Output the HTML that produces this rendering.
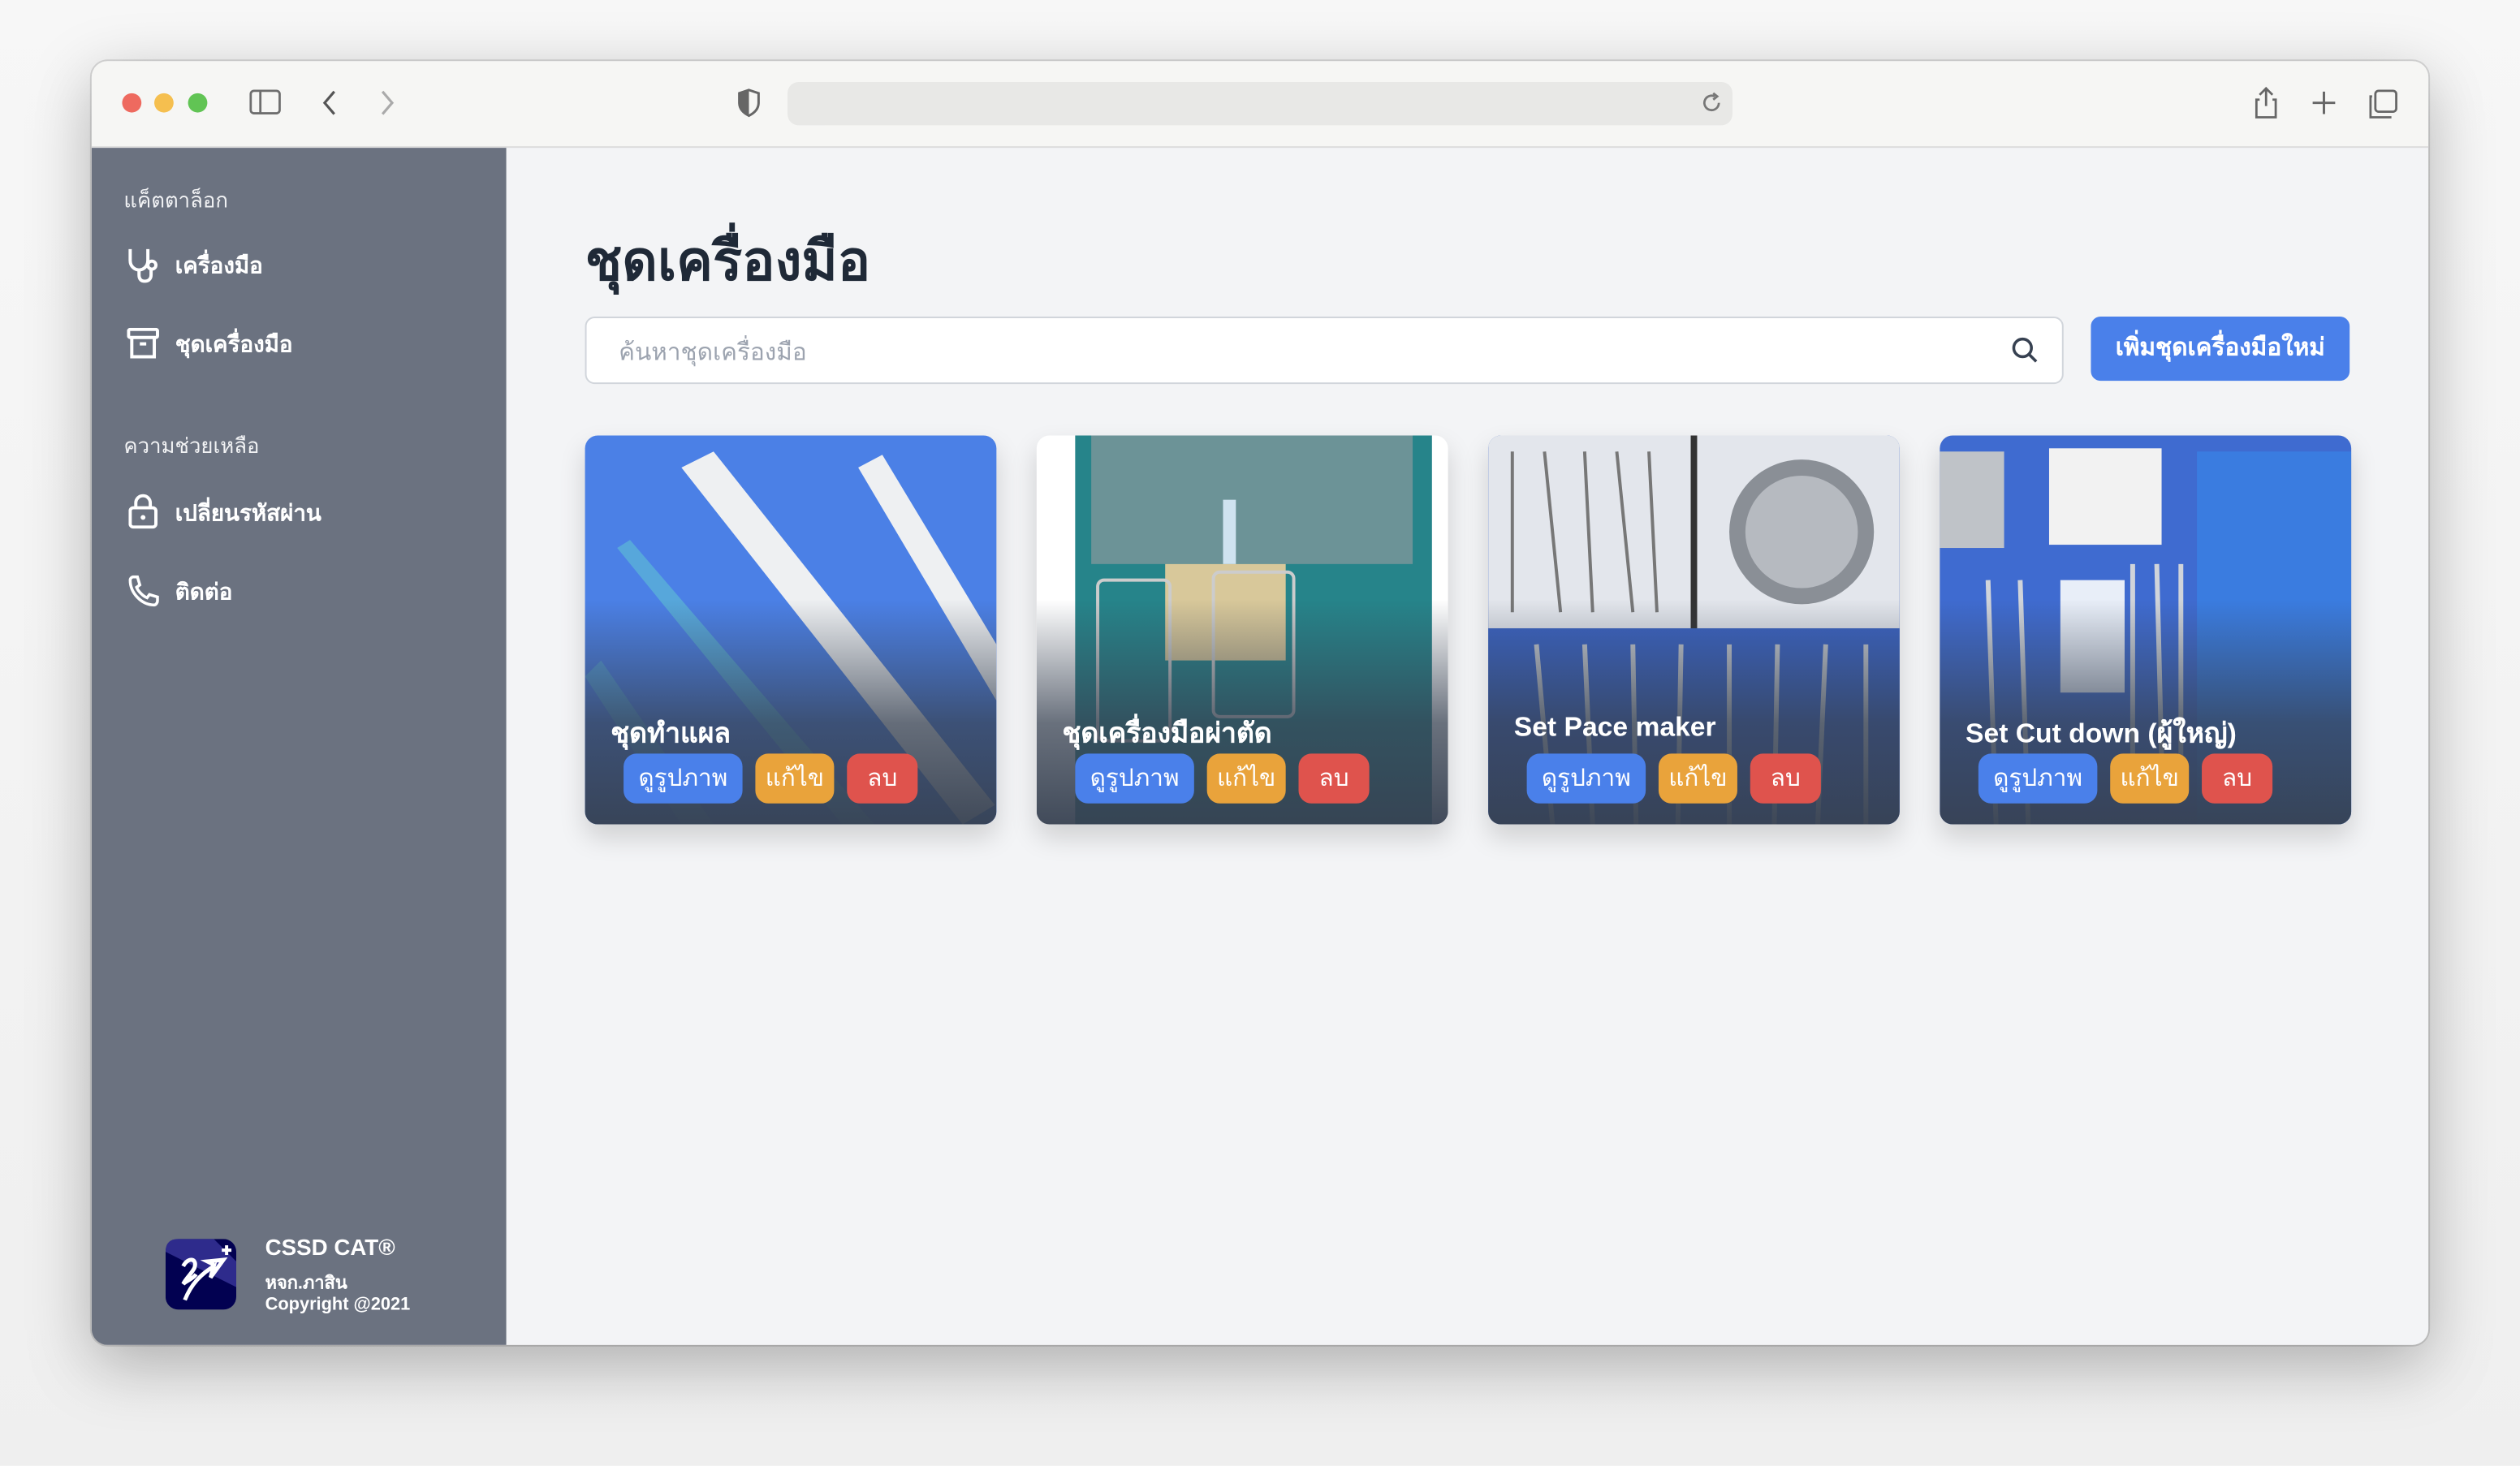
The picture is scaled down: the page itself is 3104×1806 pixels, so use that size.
<!DOCTYPE html>
<html><head><meta charset="utf-8">
<style>
html,body{margin:0;padding:0;}
body{width:3104px;height:1806px;overflow:hidden;background:#f4f4f4;font-family:"Liberation Sans","DejaVu Sans",sans-serif;}
#s{position:absolute;left:0;top:0;width:1568px;height:912px;transform:scale(1.97959);transform-origin:0 0;background:linear-gradient(#f7f7f7,#efefef);}
.win{position:absolute;left:57px;top:38px;width:1454px;height:799px;border-radius:10px;overflow:hidden;background:#f3f4f6;box-shadow:0 12px 40px rgba(0,0,0,.28),0 0 0 1px rgba(0,0,0,.12);}
.tb{position:absolute;left:0;top:0;width:100%;height:53px;background:#f6f6f4;border-bottom:1px solid #dcdcdc;}
.dot{position:absolute;top:20px;width:12px;height:12px;border-radius:50%;}
.side{position:absolute;left:0;top:54px;width:258px;height:745px;background:#6b7280;color:#fff;}
.abs{position:absolute;}
.sec{position:absolute;left:20px;font-size:13px;font-weight:300;color:#f1f2f4;}
.item{position:absolute;left:52px;font-size:14px;font-weight:700;}
.card{position:absolute;top:233px;width:256px;height:242px;border-radius:8px;overflow:hidden;box-shadow:0 8px 16px rgba(0,0,0,.15);}
.ov{position:absolute;left:0;right:0;bottom:0;height:140px;background:linear-gradient(rgba(55,65,81,0),rgba(55,65,81,.75) 55%,rgba(55,65,81,.95));}
.ct{position:absolute;left:16px;top:172px;color:#fff;font-size:17px;font-weight:600;white-space:nowrap;}
.b{position:absolute;top:198px;height:31px;border-radius:8px;color:#fff;font-size:15px;font-weight:500;line-height:31px;text-align:center;}
.b1{left:24px;width:74px;background:#4a80ea;}
.b2{left:106px;width:49px;background:#e9a33b;}
.b3{left:163px;width:44px;background:#df534d;}
</style></head><body><div id="s">
<div class="win">
 <div class="tb">
  <div class="dot" style="left:19px;background:#ee6a5f"></div>
  <div class="dot" style="left:39px;background:#f5bf4f"></div>
  <div class="dot" style="left:60px;background:#61c454"></div>
  <svg class="abs" style="left:98px;top:17px" width="20" height="18" viewBox="0 0 20 18"><rect x="1" y="1.5" width="18" height="14" rx="2" fill="none" stroke="#6e6e6e" stroke-width="1.4"/><line x1="7" y1="1.5" x2="7" y2="15.5" stroke="#6e6e6e" stroke-width="1.4"/></svg>
  <svg class="abs" style="left:142px;top:17px" width="12" height="18"><path d="M9 2 L3 9 L9 16" fill="none" stroke="#555" stroke-width="1.6"/></svg>
  <svg class="abs" style="left:178px;top:17px" width="12" height="18"><path d="M3 2 L9 9 L3 16" fill="none" stroke="#aaa" stroke-width="1.6"/></svg>
  <svg class="abs" style="left:402px;top:17px" width="14" height="18"><path d="M7 1 L13 3 V9 C13 13 10 15.5 7 17 C4 15.5 1 13 1 9 V3 Z" fill="none" stroke="#666" stroke-width="1.5"/><path d="M7 1 L1 3 V9 C1 13 4 15.5 7 17 Z" fill="#666"/></svg>
  <div class="abs" style="left:433px;top:13px;width:588px;height:27px;border-radius:7px;background:#e8e8e6"></div>
  <svg class="abs" style="left:1001px;top:19px" width="14" height="14"><path d="M11.5 7 A4.5 4.5 0 1 1 9 3" fill="none" stroke="#777" stroke-width="1.4"/><path d="M8 1 L10.5 3 L8 5" fill="none" stroke="#777" stroke-width="1.4"/></svg>
  <svg class="abs" style="left:1344px;top:15px" width="18" height="22"><path d="M9 2 V13 M5 6 L9 2 L13 6 M5 9 H3 V20 H15 V9 H13" fill="none" stroke="#666" stroke-width="1.4"/></svg>
  <svg class="abs" style="left:1381px;top:18px" width="16" height="16"><path d="M8 1 V15 M1 8 H15" stroke="#666" stroke-width="1.5"/></svg>
  <svg class="abs" style="left:1416px;top:17px" width="20" height="20"><rect x="5" y="1.5" width="13" height="13" rx="2" fill="none" stroke="#666" stroke-width="1.4"/><path d="M3 5 H2 V18 H15" fill="none" stroke="#666" stroke-width="1.4"/></svg>
 </div>
 <div class="side">
  <div class="sec" style="top:22px">แค็ตตาล็อก</div>
  <svg class="abs" style="left:21px;top:61px" width="22" height="24" viewBox="0 0 22 24"><path d="M3 2 V9 C3 13 6 15 8.5 15 C11 15 14 13 14 9 V2" fill="none" stroke="#fff" stroke-width="2"/><path d="M8.5 15 V18 C8.5 21 10 22 12 22 C14 22 16 21 16 18 V15" fill="none" stroke="#fff" stroke-width="2"/><circle cx="16.5" cy="12" r="2.5" fill="none" stroke="#fff" stroke-width="2"/></svg>
  <div class="item" style="top:63px">เครื่องมือ</div>
  <svg class="abs" style="left:22px;top:112px" width="20" height="20" viewBox="0 0 20 20"><rect x="1" y="1" width="18" height="5" rx="1" fill="none" stroke="#fff" stroke-width="2"/><path d="M3 6 V18 H17 V6 M8 10 H12" fill="none" stroke="#fff" stroke-width="2"/></svg>
  <div class="item" style="top:112px">ชุดเครื่องมือ</div>
  <div class="sec" style="top:175px">ความช่วยเหลือ</div>
  <svg class="abs" style="left:23px;top:215px" width="18" height="22" viewBox="0 0 18 22"><rect x="1" y="9" width="16" height="12" rx="2" fill="none" stroke="#fff" stroke-width="2"/><path d="M4.5 9 V6 A4.5 4.5 0 0 1 13.5 6 V9" fill="none" stroke="#fff" stroke-width="2"/><circle cx="9" cy="15" r="1.5" fill="#fff"/></svg>
  <div class="item" style="top:217px">เปลี่ยนรหัสผ่าน</div>
  <svg class="abs" style="left:22px;top:266px" width="20" height="20" viewBox="0 0 20 20"><path d="M2 3 C2 2 3 1 4 1 H6.5 L8 6 L6 7.5 C7 10 10 13 12.5 14 L14 12 L19 13.5 V16 C19 17 18 18.5 17 18.5 C9 18.5 2 11 2 3 Z" fill="none" stroke="#fff" stroke-width="1.8"/></svg>
  <div class="item" style="top:266px">ติดต่อ</div>
  <svg class="abs" style="left:46px;top:679px" width="44" height="44" viewBox="0 0 44 44"><rect width="44" height="44" rx="8" fill="#020151"/><path d="M0 8 Q0 0 8 0 H30 L44 14 V30 Z" fill="#2e2b8c"/><path d="M12 38 C16 28 22 22 30 17 L28 24 L36 13 L26 14 L30 16" fill="none" stroke="#fff" stroke-width="2.5"/><path d="M11 17 C14 11 20 12 18 18 C16 22 13 24 11 28 C13 26 17 25 19 22" fill="none" stroke="#fff" stroke-width="2.5"/><path d="M38 4 V10 M35 7 H41" stroke="#fff" stroke-width="2"/></svg>
  <div class="abs" style="left:108px;top:676px;font-size:14px;font-weight:600">CSSD CAT®</div>
  <div class="abs" style="left:108px;top:697px;font-size:11px;font-weight:600">หจก.ภาสิน</div>
  <div class="abs" style="left:108px;top:714px;font-size:11px;font-weight:600">Copyright @2021</div>
 </div>
 <div class="abs" style="left:307px;top:97px;font-size:34px;font-weight:700;color:#1f2937">ชุดเครื่องมือ</div>
 <div class="abs" style="left:307px;top:159px;width:918px;height:40px;background:#fff;border:1px solid #d1d5db;border-radius:6px"></div>
 <div class="abs" style="left:328px;top:169px;font-size:15px;color:#9ca3af">ค้นหาชุดเครื่องมือ</div>
 <svg class="abs" style="left:1194px;top:171px" width="18" height="18"><circle cx="7.5" cy="7.5" r="5.5" fill="none" stroke="#374151" stroke-width="1.8"/><path d="M11.5 11.5 L16 16" stroke="#374151" stroke-width="1.8"/></svg>
 <div class="abs" style="left:1244px;top:159px;width:161px;height:40px;border-radius:6px;background:#4a80ea;color:#fff;font-size:15px;font-weight:600;line-height:40px;text-align:center">เพิ่มชุดเครื่องมือใหม่</div>

 <div class="card" style="left:307px;background:#4b80e6">
  <svg class="abs" width="256" height="242"><g fill="#eef0f2"><path d="M60 20 L80 10 L255 230 L235 242 Z"/><path d="M170 20 L185 12 L256 130 L256 165 Z"/></g><path d="M20 70 L28 65 L180 242 L160 242 Z" fill="#5ab0d8" opacity=".8"/><path d="M0 150 L10 140 L80 242 L60 242 Z" fill="#5ab0d8" opacity=".6"/></svg>
  <div class="ov"></div><div class="ct">ชุดทำแผล</div>
  <div class="b b1">ดูรูปภาพ</div><div class="b b2">แก้ไข</div><div class="b b3">ลบ</div>
 </div>
 <div class="card" style="left:588px;background:#fff">
  <svg class="abs" width="256" height="242"><rect x="24" y="0" width="222" height="242" fill="#26848a"/><rect x="34" y="0" width="200" height="80" fill="#8a9a9c" opacity=".7"/><rect x="80" y="80" width="75" height="60" fill="#d8c89a"/><rect x="116" y="40" width="8" height="40" fill="#cfe3f0"/><rect x="110" y="85" width="50" height="90" rx="4" fill="none" stroke="#ccc" stroke-width="2"/><rect x="38" y="90" width="45" height="100" rx="4" fill="none" stroke="#ccc" stroke-width="2"/></svg>
  <div class="ov"></div><div class="ct">ชุดเครื่องมือผ่าตัด</div>
  <div class="b b1">ดูรูปภาพ</div><div class="b b2">แก้ไข</div><div class="b b3">ลบ</div>
 </div>
 <div class="card" style="left:869px;background:#3a63c4">
  <svg class="abs" width="256" height="242"><rect width="256" height="120" fill="#e3e6ec"/><rect x="126" y="0" width="4" height="120" fill="#333"/><circle cx="195" cy="60" r="45" fill="#8a8f96"/><circle cx="195" cy="60" r="35" fill="#b6bac0"/><g stroke="#777" stroke-width="2" fill="none"><path d="M15 10 L15 110 M35 10 L45 110 M60 10 L65 110 M80 10 L90 110 M100 10 L105 110"/></g><g stroke="#c8ccd2" stroke-width="3"><path d="M30 130 L40 242 M60 130 L65 242 M90 130 L92 242 M120 130 L118 242 M150 130 L150 242 M180 130 L178 242 M210 130 L205 242 M235 130 L235 242"/></g></svg>
  <div class="ov"></div><div class="ct">Set Pace maker</div>
  <div class="b b1">ดูรูปภาพ</div><div class="b b2">แก้ไข</div><div class="b b3">ลบ</div>
 </div>
 <div class="card" style="left:1150px;background:#3f6bd0">
  <svg class="abs" width="256" height="242"><rect x="160" y="10" width="96" height="232" fill="#3a7ce0"/><rect x="68" y="8" width="70" height="60" fill="#f2f2f2"/><rect x="0" y="10" width="40" height="60" fill="#bfc3c8"/><g stroke="#d0d4da" stroke-width="3"><path d="M30 90 L35 242 M50 90 L55 242 M120 80 L120 200 M135 80 L138 200 M150 80 L150 200"/></g><rect x="75" y="90" width="40" height="70" fill="#e8eef8"/></svg>
  <div class="ov"></div><div class="ct">Set Cut down (ผู้ใหญ่)</div>
  <div class="b b1">ดูรูปภาพ</div><div class="b b2">แก้ไข</div><div class="b b3">ลบ</div>
 </div>
</div>
</div></body></html>
